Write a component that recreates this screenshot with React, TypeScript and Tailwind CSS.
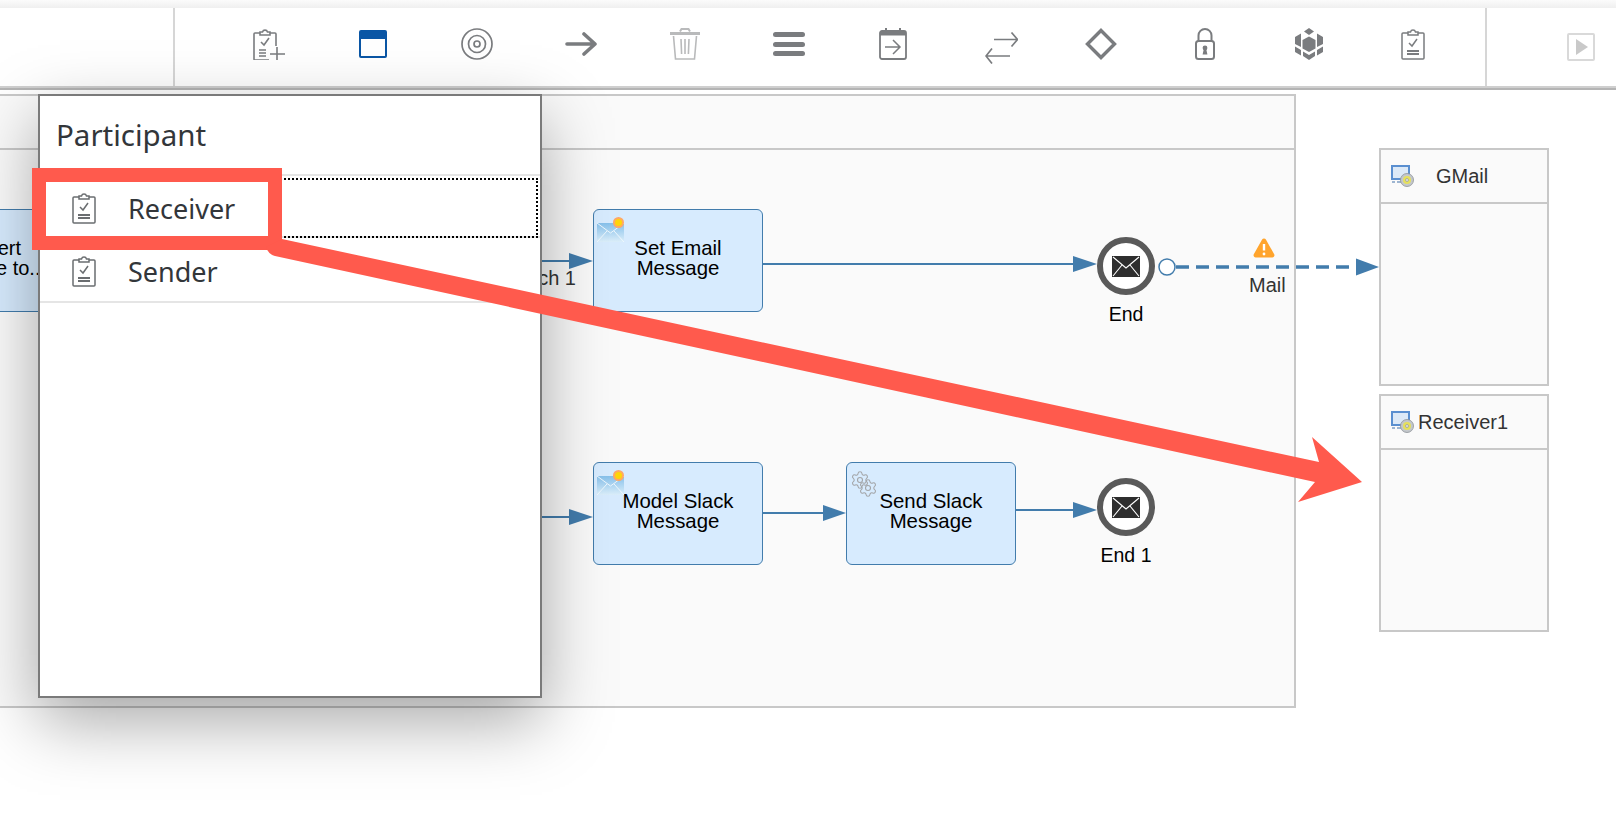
import { Settings } from "lucide-react";
import { FC, ReactNode } from "react";

const GRAY = "#7a7c7f";

function ClipboardIcon({ color = GRAY }: { color?: string }) {
  return (
    <svg width="24" height="32" viewBox="0 0 24 32" fill="none" stroke={color} strokeWidth="1.5">
      <path d="M7 5H2a1 1 0 0 0-1 1v24a1 1 0 0 0 1 1h20a1 1 0 0 0 1-1V6a1 1 0 0 0-1-1h-5" />
      <path d="M7 7V4h2.5a2.6 2.6 0 0 1 5 0H17v3z" />
      <path d="M8 15l3 3 5-7" />
      <path d="M6 23h12M6 26h12" strokeWidth="1.8" />
    </svg>
  );
}

const ToolbarIcons: ReactNode[] = [
  <svg key="add" width="32" height="32" viewBox="0 0 32 32" fill="none" stroke={GRAY} strokeWidth="1.6">
    <path d="M7 5H2a1 1 0 0 0-1 1v25a1 1 0 0 0 1 1h14M17 5h5a1 1 0 0 1 1 1v12" />
    <path d="M7 7V4h2.5a2.6 2.6 0 0 1 5 0H17v3z" />
    <path d="M8 14l3 3 5-7M6 22h7M6 25h7M6 28h7M24 19v13M17 26h15" />
  </svg>,
  <div key="window" className="flex h-7 w-7 flex-col rounded-[2px] border-2 border-[#0a56a5] bg-white">
    <div className="h-[7px] bg-[#0a56a5]" />
  </div>,
  <svg key="target" width="32" height="32" viewBox="0 0 32 32" fill="none" stroke={GRAY} strokeWidth="1.7">
    <circle cx="16" cy="16" r="15" />
    <circle cx="16" cy="16" r="8.5" />
    <circle cx="16" cy="16" r="3" />
  </svg>,
  <svg key="arrow" width="32" height="24" viewBox="0 0 32 24" fill="none" stroke={GRAY} strokeWidth="3.6" strokeLinecap="round" strokeLinejoin="round">
    <path d="M2 12h27M19 2l11 10-11 10" />
  </svg>,
  <svg key="trash" width="30" height="32" viewBox="0 0 30 32" fill="none" stroke="#b9babb" strokeWidth="1.6">
    <path d="M0 5.5h30" strokeWidth="3" />
    <path d="M10 3.5L11.5 1h7L20 3.5" strokeWidth="2" />
    <path d="M3.5 8l2 23h19l2-23M11 11l.6 15M15 11v15M19 11l-.6 15" />
  </svg>,
  <div key="menu" className="flex h-6 w-8 flex-col justify-between">
    <div className="h-[5px] rounded-full bg-[#7a7c7f]" />
    <div className="h-[5px] rounded-full bg-[#7a7c7f]" />
    <div className="h-[5px] rounded-full bg-[#7a7c7f]" />
  </div>,
  <svg key="calendar" width="28" height="32" viewBox="0 0 28 32" fill="none" stroke={GRAY} strokeWidth="1.8">
    <rect x="1" y="3" width="26" height="28" rx="2" />
    <path d="M1 5.5h26" strokeWidth="4" />
    <path d="M7 0v4M21 0v4" strokeWidth="2" />
    <path d="M6 19h15M14 12l7 7-7 7" strokeWidth="1.5" />
  </svg>,
  <svg key="swap" className="mt-[8px] ml-[8px]" width="33" height="32" viewBox="0 0 33 32" fill="none" stroke={GRAY} strokeWidth="1.7">
    <path d="M9 7.5h23M26.5 0.5l6 7-6 7M25 24H1M7 16.5L1 24l6 7.5" />
  </svg>,
  <svg key="diamond" width="32" height="32" viewBox="0 0 32 32" fill="none" stroke={GRAY} strokeWidth="3.4">
    <path d="M16 2.5L29.5 16 16 29.5 2.5 16z" />
  </svg>,
  <svg key="lock" width="20" height="32" viewBox="0 0 20 32" fill="none" stroke={GRAY} strokeWidth="2">
    <path d="M3.5 13V7.5a6.5 6.5 0 0 1 13 0V13" />
    <rect x="1" y="13" width="18" height="18" rx="2.5" />
    <circle cx="10" cy="20" r="2.4" fill={GRAY} stroke="none" />
    <path d="M9 20h2l1.400 6.500H7.600z" fill={GRAY} stroke="none" />
  </svg>,
  <svg key="cube" width="28" height="32" viewBox="0 0 28 32" fill={GRAY}>
    <path d="M14 0l5 3.500L14 7 9 3.500z" />
    <path d="M14 8.500l6.500 3.500v8.500L14 24l-6.500-3.500V12z" />
    <path d="M0 9l6-3.500V19l-6-3zM28 9l-6-3.500V19l6-3z" />
    <path d="M0 18.500L6 22v5.500L0 24zM28 18.500L22 22v5.500L28 24z" />
    <path d="M8 23.500l6 3.500 6-3.500V28l-6 4-6-4z" />
  </svg>,
  <ClipboardIcon key="clipboard" />,
];

function Toolbar() {
  return (
    <div className="flex h-[78px] bg-white">
      <div className="w-[175px] border-r-2 border-[#d6d6d6]" />
      <div className="flex w-[1312px] items-center border-r-2 border-[#d6d6d6] pl-[42px] pb-[6px]">
        {ToolbarIcons.map((icon, index) => (
          <div key={index} className="flex w-[104px] items-center justify-center">
            {icon}
          </div>
        ))}
      </div>
      <div className="flex flex-1 items-center justify-end pr-[21px]">
        <div className="flex h-7 w-7 items-center justify-center rounded-[2px] border-2 border-[#d9d9d9] pl-[2px]">
          <div className="h-0 w-0 border-y-[8px] border-l-[12px] border-y-transparent border-l-[#c9c9c9]" />
        </div>
      </div>
    </div>
  );
}

function MailTaskIcon() {
  return (
    <svg width="28" height="25" viewBox="0 0 28 25" fill="none">
      <defs>
        <linearGradient id="mailFill" x1="0" y1="0" x2="0" y2="1">
          <stop offset="0" stopColor="#86c0ea" />
          <stop offset="1" stopColor="#dbeefa" />
        </linearGradient>
      </defs>
      <rect x="0" y="6" width="27" height="19" fill="url(#mailFill)" />
      <path d="M0 6l13.500 10L27 6M0 25l10-11M27 25L17 14" stroke="#eef7fd" strokeWidth="1" />
      <circle cx="21.500" cy="5.500" r="5.500" fill="#ffa866" />
      <circle cx="21.500" cy="5.500" r="3.500" fill="#ffd60a" />
    </svg>
  );
}

function GearTaskIcon() {
  return (
    <div className="relative h-[28px] w-[28px] text-[#a3a5a8]">
      <Settings size={20} strokeWidth={1.3} className="absolute left-0 top-0" />
      <Settings size={20} strokeWidth={1.3} className="absolute bottom-0 right-0" />
    </div>
  );
}

function SystemIcon() {
  return (
    <svg width="23" height="22" viewBox="0 0 23 22" fill="none">
      <rect x="1" y="1" width="17" height="13" fill="#dce9f7" stroke="#5a8fd0" strokeWidth="2" />
      <path d="M6 17h6M1 17h3" stroke="#7f9ec4" strokeWidth="1.500" />
      <circle cx="16" cy="15" r="6.500" fill="#c4c8cc" stroke="#8b9097" strokeWidth="0.800" />
      <circle cx="16" cy="15" r="4" fill="#e6e05c" />
      <circle cx="16" cy="15" r="1.500" fill="#dfe3e6" stroke="#8b9097" strokeWidth="0.600" />
    </svg>
  );
}

type TaskBoxProps = {
  className: string;
  lines: string[];
  icon?: ReactNode;
};

// task node on the diagram, same size everywhere
const TaskBox: FC<TaskBoxProps> = ({ className, lines, icon }) => (
  <div
    className={`absolute flex h-[103px] w-[170px] flex-col items-center justify-center rounded-[6px] border-[1.5px] border-[#427cac] bg-[#d7ebfe] pb-[6px] text-[20.400px] leading-[20px] text-black ${className}`}
  >
    {icon && <div className="absolute left-[3px] top-[7px]">{icon}</div>}
    {lines.map((line) => (
      <p key={line} className="whitespace-nowrap text-center">
        {line}
      </p>
    ))}
  </div>
);

const EndEvent: FC<{ className: string; label: string }> = ({ className, label }) => (
  <div className={`absolute flex w-[58px] flex-col items-center ${className}`}>
    <div className="flex h-[58px] w-[58px] items-center justify-center rounded-full border-[6px] border-[#5a5a5a] bg-white">
      <svg width="28" height="21" viewBox="0 0 28 21" stroke="#fff" strokeWidth="1.100">
        <rect width="28" height="21" fill="#2e2e2e" stroke="none" />
        <path d="M1 1l13 11L27 1M1 20l9-11M27 20l-9-11" fill="none" />
      </svg>
    </div>
    <p className="mt-[8px] whitespace-nowrap text-[19.500px] leading-[22px] text-black">{label}</p>
  </div>
);

const Lane: FC<{ className: string; name: string; nameClass: string }> = ({ className, name, nameClass }) => (
  <div className={`absolute flex w-[170px] flex-col border-2 border-[#c8c8c8] bg-[#fafafa] ${className}`}>
    <div className="flex h-[54px] shrink-0 items-center border-b-2 border-[#c8c8c8] pl-[10px] text-[20px] text-[#333]">
      <SystemIcon />
      <span className={nameClass}>{name}</span>
    </div>
  </div>
);

function Connectors() {
  return (
    <svg className="absolute inset-0 h-full w-full" fill="none">
      <g stroke="#427cac" strokeWidth="2">
        <path d="M500 171H572" />
        <path d="M762 174H1076" />
        <path d="M500 427H572" />
        <path d="M762 423H826" />
        <path d="M1015 420H1076" />
      </g>
      <g fill="#427cac">
        <path d="M569 163L593 171L569 179z" />
        <path d="M1073 166L1097 174L1073 182z" />
        <path d="M569 419L593 427L569 435z" />
        <path d="M823 415L846 423L823 431z" />
        <path d="M1073 412L1097 420L1073 428z" />
        <path d="M1356 168.500L1379 177L1356 185.500z" />
      </g>
      <path d="M1176 177H1358" stroke="#427cac" strokeWidth="3.500" strokeDasharray="13 7" />
      <circle cx="1167" cy="177" r="8" fill="#fff" stroke="#427cac" strokeWidth="1.500" />
      <path
        d="M1264 148.500c.8 0 1.500.4 1.900 1.100l8.300 14.700c.8 1.400-.2 3.200-1.900 3.200h-16.600c-1.700 0-2.700-1.800-1.900-3.200l8.300-14.700c.4-.7 1.100-1.100 1.900-1.100z"
        fill="#ffa42c"
      />
      <path d="M1264 154v6.500" stroke="#fff" strokeWidth="2.400" />
      <circle cx="1264" cy="164" r="1.400" fill="#fff" />
    </svg>
  );
}

function Diagram() {
  return (
    <div className="relative flex-1 font-['Liberation_Sans',Arial,sans-serif]">
      <div className="absolute left-[-10px] top-[4px] flex h-[614px] w-[1306px] flex-col border-2 border-[#c8c8c8] bg-[#fafafa]">
        <div className="h-[54px] shrink-0 border-b-2 border-[#c8c8c8]" />
      </div>

      <Lane className="left-[1379px] top-[58px] h-[238px]" name="GMail" nameClass="ml-[22px]" />
      <Lane className="left-[1379px] top-[304px] h-[238px]" name="Receiver1" nameClass="ml-[4px]" />

      <Connectors />

      <TaskBox className="left-[-99px] top-[119px] [&_p]:text-[20px]" lines={["Convert", "Message to..."]} />
      <TaskBox className="left-[593px] top-[119px]" lines={["Set Email", "Message"]} icon={<MailTaskIcon />} />
      <TaskBox className="left-[593px] top-[372px]" lines={["Model Slack", "Message"]} icon={<MailTaskIcon />} />
      <TaskBox className="left-[846px] top-[372px]" lines={["Send Slack", "Message"]} icon={<GearTaskIcon />} />

      <EndEvent className="left-[1097px] top-[147px]" label="End" />
      <EndEvent className="left-[1097px] top-[388px]" label="End 1" />

      <p className="absolute left-[476px] top-[177px] w-[100px] text-right text-[20px] leading-[22px] text-[#333]">
        Branch 1
      </p>
      <p className="absolute left-[1249px] top-[184px] text-[20px] leading-[22px] text-[#333]">Mail</p>
    </div>
  );
}

const ParticipantRow: FC<{ label: string }> = ({ label }) => (
  <>
    <ClipboardIcon color="#6a6d70" />
    <span className="ml-[32px] text-[27px] leading-none text-[#32363a]">{label}</span>
  </>
);

function ParticipantPopup() {
  return (
    <div className="absolute left-[38px] top-[94px] flex h-[604px] w-[504px] flex-col border-2 border-[#7a7a7a] bg-white font-['Noto_Sans',sans-serif] shadow-[0_24px_64px_rgba(0,0,0,0.34)]">
      <h2 className="flex h-[78px] shrink-0 items-center pl-[16px] text-[29.500px] font-normal text-[#32363a]">
        Participant
      </h2>
      <div className="h-[64px] shrink-0 border-y-2 border-[#e5e5e5] pt-[2px]">
        <div className="mr-[2px] flex h-[60px] items-center border-2 border-dotted border-black pl-[30px]">
          <ParticipantRow label="Receiver" />
        </div>
      </div>
      <div className="flex h-[65px] shrink-0 items-center border-b-2 border-[#e5e5e5] pl-[32px] pt-[3px]">
        <ParticipantRow label="Sender" />
      </div>
    </div>
  );
}

function Annotation() {
  return (
    <>
      <div className="absolute left-[32px] top-[168px] h-[82px] w-[250px] border-[14px] border-[#ff5a4d]" />
      <svg className="absolute inset-0 h-full w-full" fill="#ff5a4d">
        <path d="M282 239L1319 462L1312 437L1362 482L1298 502L1315 482L275 256Q268 254 266 247z" />
      </svg>
    </>
  );
}

export default function App() {
  return (
    <div className="relative flex h-[820px] w-[1616px] flex-col overflow-hidden bg-white">
      <div className="h-2 bg-gradient-to-b from-[#fbfbfb] to-[#efefef]" />
      <Toolbar />
      <div className="h-[4px] border-t-2 border-[#cfcfcf] bg-[#b4b4b4]" />
      <Diagram />
      <ParticipantPopup />
      <Annotation />
    </div>
  );
}
